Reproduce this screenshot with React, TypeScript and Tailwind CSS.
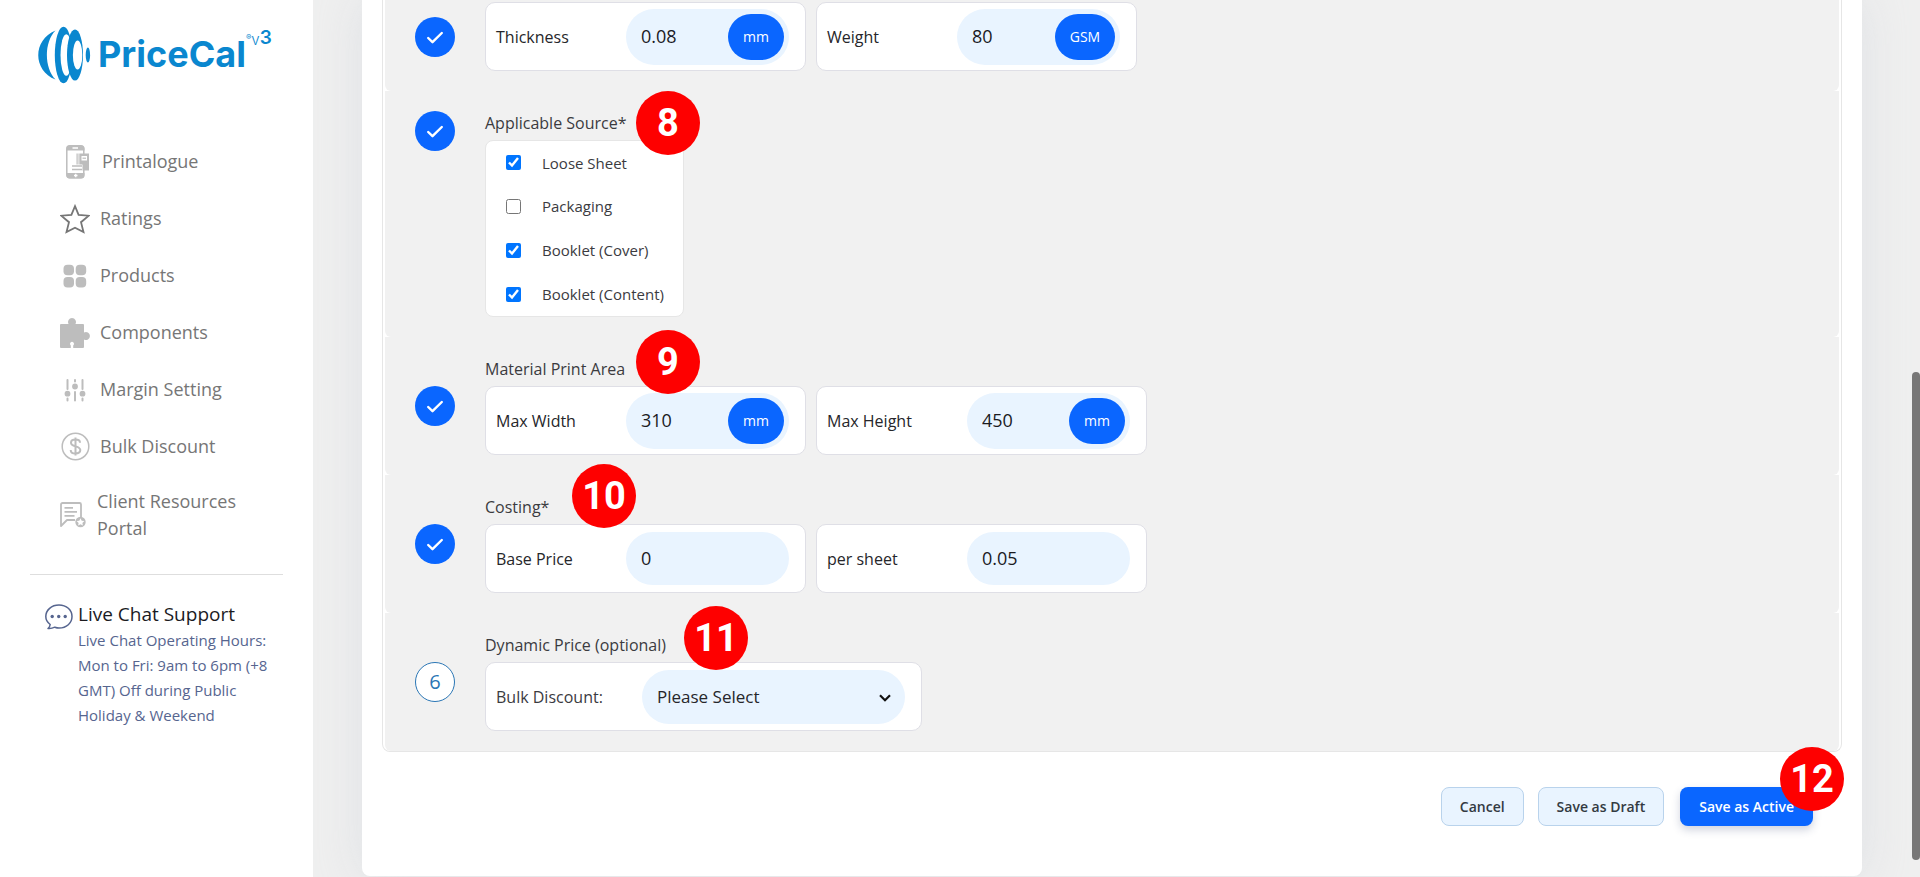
import type { ReactNode } from "react";

const GREY = "#bdbdbd";

function Logo() {
  return (
    <a href="#" aria-label="PriceCal v3" className="flex items-start pl-[38px] pt-[26px] text-[#0a87cf]">
      <svg width="54" height="58" viewBox="0 0 54 58" className="shrink-0">
        <path d="M17.500 4.500C-5.500 14 -5.500 44.500 17.500 53.500C6 42 6 16 17.500 4.500Z" fill="#0a87cf" />
        <ellipse cx="25.500" cy="29" rx="8.700" ry="28.300" fill="#0a87cf" />
        <ellipse cx="28.300" cy="29" rx="5.800" ry="20.800" fill="#fff" />
        <ellipse cx="37" cy="29" rx="8" ry="25.600" fill="#0a87cf" />
        <ellipse cx="39.600" cy="29" rx="4.700" ry="14.500" fill="#fff" />
        <ellipse cx="49.900" cy="29" rx="2.200" ry="7.500" fill="#0a87cf" />
      </svg>
      <span className="pl-[6px] pt-[7px] font-[Inter,sans-serif] text-[36px] font-bold leading-[42px]">PriceCal</span>
      <span className="flex items-start pt-1 font-[Inter,sans-serif] leading-none">
        <span className="pt-[3px] text-[8px]">®</span>
        <span className="pt-[2px] text-[15px] font-light leading-[16px]">v</span>
        <span className="text-[19px] font-semibold leading-[16px]">3</span>
      </span>
    </a>
  );
}

function PhoneIcon() {
  return (
    <svg width="24" height="34" viewBox="0 0 24 34">
      <rect x="0.800" y="0.800" width="17" height="32" rx="3" fill="#fff" stroke={GREY} strokeWidth="1.500" />
      <path d="M.5 5.500V4a3.500 3.500 0 0 1 3.500-3.500h11A3.500 3.500 0 0 1 18.500 4v1.500zM.5 28v2A3.500 3.500 0 0 0 4 33.500h11a3.500 3.500 0 0 0 3.500-3.500v-2z" fill={GREY} />
      <path d="M6.500 3h5.500M8 30.500h3.500M9.750 28.800v3.500" stroke="#fff" strokeWidth="1.300" />
      <path d="M10.500 8.500h1.200V25h-1.200zM12.500 8.500h1.200V25h-1.200z" fill={GREY} />
      <path d="M14 8.500h9V25.500h-9z" fill={GREY} />
      <path d="M15.500 11h5.500v4.500h-5.500z" fill="#fff" />
      <path d="M16.500 13.200h3.500" stroke={GREY} strokeWidth="1.200" />
      <path d="M5 19.500h11.500v7H5z" fill="#fff" />
      <path d="M6 21h10M6 24.500h10" stroke={GREY} strokeWidth="1.500" />
    </svg>
  );
}

function StarIcon() {
  return (
    <svg width="30" height="30" viewBox="0 0 30 30" fill="none" stroke="#767676" strokeWidth="1.800" strokeLinejoin="miter">
      <path d="M15 2.200l3.600 8.700 10.200.8-7.800 6.500 2.500 9.800-8.500-4.200-8.500 4.200 2.500-9.800L1.200 11.700l10.200-.8z" />
    </svg>
  );
}

function GridIcon() {
  return (
    <svg width="24" height="24" viewBox="0 0 24 24" fill={GREY}>
      <rect x="0.500" y="0.800" width="10.500" height="10.500" rx="4" />
      <rect x="12.700" y="0.800" width="10.500" height="10.500" rx="4" />
      <rect x="0.500" y="13" width="10.500" height="10.500" rx="4" />
      <rect x="12.700" y="13" width="10.500" height="10.500" rx="4" />
    </svg>
  );
}

function PuzzleIcon() {
  return (
    <svg width="30" height="30" viewBox="0 0 30 30" fill={GREY}>
      <path d="M1 6h7.500a4 4 0 1 1 7 0H23a1 1 0 0 1 1 1v7.500a4 4 0 1 1 0 7V29a1 1 0 0 1-1 1h-9.800v-2.500a2 2 0 1 0-2.400 0V30H1a1 1 0 0 1-1-1V7a1 1 0 0 1 1-1z" />
    </svg>
  );
}

function SlidersIcon() {
  return (
    <svg width="22" height="24" viewBox="0 0 22 24" stroke={GREY} strokeWidth="2" fill={GREY} strokeLinecap="round">
      <path d="M3.500 2v9M3.500 20.500v2M11 2v1.500M11 14v8.500M18.500 2v9M18.500 20.500v2" fill="none" />
      <circle cx="3.500" cy="15.700" r="1.900" />
      <circle cx="11" cy="8.500" r="1.900" />
      <circle cx="18.500" cy="15.700" r="1.900" />
    </svg>
  );
}

function DollarIcon() {
  return (
    <svg width="29" height="29" viewBox="0 0 29 29" fill="none" stroke={GREY}>
      <circle cx="14.500" cy="14.500" r="13.300" strokeWidth="1.500" />
      <path d="M14.500 5.500v18M19 10.800c0-2-1.800-3.200-4.500-3.200S10 8.800 10 10.800c0 4.600 9.300 2.600 9.300 7.300 0 2.200-2 3.400-4.800 3.400s-4.800-1.300-4.800-3.600" strokeWidth="2" />
    </svg>
  );
}

function ResourceIcon() {
  return (
    <svg width="27" height="26" viewBox="0 0 27 26" fill="none" stroke={GREY} strokeWidth="1.800">
      <path d="M15 18H7l-6 6V2.500A1.500 1.500 0 0 1 2.500 1h17A1.500 1.500 0 0 1 21 2.500V15" strokeLinejoin="round" />
      <path d="M4.500 5.800h8.500M4.500 9.800h12.500M4.500 13.800h10" />
      <circle cx="20.500" cy="20" r="5.200" fill={GREY} stroke="none" />
      <path d="M20.500 16.200l1.200 2.500 2.700.3-2 1.900.5 2.700-2.400-1.300-2.400 1.300.5-2.700-2-1.900 2.700-.3z" fill="#fff" stroke="none" />
    </svg>
  );
}

function ChatIcon() {
  return (
    <svg width="28" height="26" viewBox="0 0 28 26" fill="none" stroke="#56658f" strokeWidth="1.500" className="mt-1 shrink-0">
      <path d="M5.200 20.500C2.500 18.500.8 15.500.8 12.500.8 6 6.500 1 14 1s13 5 13 11.500S21.500 24 14 24c-1.500 0-3-.4-4.200-.8-2 1-4.400 1.600-6.800 1.300 1.300-1 2-2.400 2.200-4z" strokeLinejoin="round" />
      <g fill="#56658f" stroke="none">
        <circle cx="7.200" cy="12.500" r="1.700" />
        <circle cx="13.700" cy="12.500" r="1.700" />
        <circle cx="20.200" cy="12.500" r="1.700" />
      </g>
    </svg>
  );
}

function NavItem({ icon, children, tall = false }: { icon: ReactNode; children: ReactNode; tall?: boolean }) {
  return (
    <li>
      <a
        href="#"
        className={
          tall
            ? "flex h-20 items-center gap-[10px] pl-[60px] pr-10 text-[18px] leading-[27px] text-[#767676]"
            : "flex h-[57px] items-center gap-[10px] pl-[60px] text-[18px] leading-[27px] text-[#767676]"
        }
      >
        {icon}
        <span>{children}</span>
      </a>
    </li>
  );
}

function Slot({ children }: { children: ReactNode }) {
  return <span className="flex w-[30px] shrink-0 justify-center">{children}</span>;
}

function Sidebar() {
  return (
    <aside className="w-[313px] shrink-0 bg-white">
      <Logo />
      <nav className="mt-[49px]">
        <ul>
          <NavItem icon={<span className="flex w-8 justify-center pl-1"><PhoneIcon /></span>}>Printalogue</NavItem>
          <NavItem icon={<Slot><StarIcon /></Slot>}>Ratings</NavItem>
          <NavItem icon={<Slot><GridIcon /></Slot>}>Products</NavItem>
          <NavItem icon={<Slot><PuzzleIcon /></Slot>}>Components</NavItem>
          <NavItem icon={<Slot><SlidersIcon /></Slot>}>Margin Setting</NavItem>
          <NavItem icon={<Slot><DollarIcon /></Slot>}>Bulk Discount</NavItem>
          <NavItem tall icon={<span className="shrink-0"><ResourceIcon /></span>}>Client Resources Portal</NavItem>
        </ul>
      </nav>
      <hr className="ml-[30px] mr-[30px] mt-[19px] border-[#dedede]" />
      <div className="flex gap-[5px] pl-[45px] pr-10 pt-[25px]">
        <ChatIcon />
        <div>
          <h2 className="text-[19px] font-medium leading-[28px] text-[#1b1b1f]">Live Chat Support</h2>
          <p className="text-[15px] leading-[25px] text-[#56658f]">
            Live Chat Operating Hours: Mon to Fri: 9am to 6pm (+8 GMT) Off during Public Holiday &amp; Weekend
          </p>
        </div>
      </div>
    </aside>
  );
}

function Marker({ n, place }: { n: number; place: string }) {
  return (
    <span
      className={`absolute z-10 flex size-16 items-center justify-center rounded-full bg-[#fe0000] font-[Roboto,sans-serif] text-[38px] font-bold leading-none text-white ${place}`}
    >
      {n}
    </span>
  );
}

function Step({ n, done = true, top = false }: { n?: number; done?: boolean; top?: boolean }) {
  if (!done) {
    return (
      <span className="flex size-10 shrink-0 items-center justify-center rounded-full border border-[#2a76b5] bg-white text-[20px] text-[#2a76b5]">
        {n}
      </span>
    );
  }
  return (
    <span className={`flex size-10 shrink-0 items-center justify-center rounded-full bg-[#0a66ff] ${top ? "self-start" : ""}`}>
      <svg width="18" height="14" viewBox="0 0 18 14" fill="none" stroke="#fff" strokeWidth="2.400" strokeLinecap="round" strokeLinejoin="round">
        <path d="M2.200 8l4.300 4.200L15.800 3" />
      </svg>
    </span>
  );
}

function Section({ title, marker, step, children, first = false }: {
  title?: string;
  marker?: ReactNode;
  step: ReactNode;
  children: ReactNode;
  first?: boolean;
}) {
  return (
    <section
      className={`relative flex items-center gap-[30px] rounded-b-md bg-[#f1f1f1] pb-5 pl-[30px] pr-5 ${first ? "pt-[2px]" : "pt-5"}`}
    >
      {step}
      <div>
        {title && <h3 className="mb-[5px] text-[16px] leading-6 text-[#3b3b3f]">{title}</h3>}
        <div className="flex gap-[10px]">{children}</div>
      </div>
      {marker}
    </section>
  );
}

function Field({ id, label, value, unit, wide = false }: {
  id: string;
  label: string;
  value: string;
  unit?: string;
  wide?: boolean;
}) {
  return (
    <div
      className={`flex h-[69px] items-center justify-between rounded-[10px] border border-[#dfdfe6] bg-white pl-[10px] pr-4 ${wide ? "w-[331px]" : "w-[321px]"}`}
    >
      <label htmlFor={id} className="text-[16px] text-[#26262a]">{label}</label>
      <div className={`flex w-[163px] items-center rounded-[28px] bg-[#e9f4ff] pr-[5px] ${unit ? "h-14" : "h-[53px]"}`}>
        <input id={id} defaultValue={value} className="min-w-0 flex-1 bg-transparent pl-[15px] text-[18px] text-[#1b1b1f] outline-none" />
        {unit && (
          <span
            className={`flex h-[46px] items-center justify-center rounded-full bg-[#0a66ff] text-[14px] text-white ${unit === "GSM" ? "w-[60px]" : "w-14"}`}
          >
            {unit}
          </span>
        )}
      </div>
    </div>
  );
}

const sources = [
  { label: "Loose Sheet", on: true },
  { label: "Packaging", on: false },
  { label: "Booklet (Cover)", on: true },
  { label: "Booklet (Content)", on: true },
];

export default function App() {
  return (
    <div className="flex min-h-screen overflow-hidden bg-[#efefef] font-['Open_Sans',sans-serif]">
      <Sidebar />
      <main className="relative min-w-0 flex-1 overflow-hidden pl-[49px] pr-[58px]">
        <div className="rounded-b-lg bg-white px-5 pb-[50px] shadow-[0_0_45px_rgba(200,208,216,0.42)]">
          <div className="rounded-b-lg border border-t-0 border-[#e6e6e6] px-[2px]">
            <Section first step={<Step />}>
              <Field id="thickness" label="Thickness" value="0.08" unit="mm" />
              <Field id="weight" label="Weight" value="80" unit="GSM" />
            </Section>

            <Section title="Applicable Source*" step={<Step top />} marker={<Marker n={8} place="left-[251px] top-0" />}>
              <div className="flex h-[177px] w-[199px] flex-col rounded-lg border border-[#e6e6e6] bg-white">
                {sources.map((s) => (
                  <label key={s.label} className="flex flex-1 items-center gap-[21px] pl-5 text-[15px] text-[#3b3b3f]">
                    <input type="checkbox" defaultChecked={s.on} className="size-[15px]" />
                    {s.label}
                  </label>
                ))}
              </div>
            </Section>

            <Section title="Material Print Area" step={<Step />} marker={<Marker n={9} place="left-[251px] -top-[7px]" />}>
              <Field id="max-width" label="Max Width" value="310" unit="mm" />
              <Field id="max-height" label="Max Height" value="450" unit="mm" wide />
            </Section>

            <Section title="Costing*" step={<Step />} marker={<Marker n={10} place="left-[187px] -top-[11px]" />}>
              <Field id="base-price" label="Base Price" value="0" />
              <Field id="per-sheet" label="per sheet" value="0.05" wide />
            </Section>

            <Section title="Dynamic Price (optional)" step={<Step done={false} n={6} />} marker={<Marker n={11} place="left-[299px] -top-[7px]" />}>
              <div className="flex h-[69px] w-[437px] items-center justify-between rounded-[10px] border border-[#dfdfe6] bg-white pl-[10px] pr-4">
                <label htmlFor="bulk" className="text-[16px] text-[#3b3b3f]">Bulk Discount:</label>
                <div className="relative">
                  <select
                    id="bulk"
                    className="h-[54px] w-[263px] appearance-none rounded-[27px] bg-[#e9f4ff] pl-[15px] text-[17px] text-[#26262a] outline-none"
                  >
                    <option>Please Select</option>
                  </select>
                  <svg
                    width="12"
                    height="8"
                    viewBox="0 0 12 8"
                    fill="none"
                    stroke="#111"
                    strokeWidth="2.200"
                    className="pointer-events-none absolute right-[14px] top-6"
                  >
                    <path d="M1 1.200l5 5 5-5" />
                  </svg>
                </div>
              </div>
            </Section>
          </div>

          <div className="flex justify-end pr-[29px] pt-[35px] text-[14px] font-semibold">
            <button className="h-[39px] rounded-lg border border-[#b9d3ec] bg-[#e9f4ff] px-[18px] text-[#333a42]">Cancel</button>
            <button className="ml-[14px] h-[39px] rounded-lg border border-[#b9d3ec] bg-[#e9f4ff] px-[18px] text-[#333a42]">Save as Draft</button>
            <div className="relative ml-4">
              <button className="h-[39px] rounded-lg bg-[#0a66ff] px-[19px] text-white shadow-[0_4px_8px_rgba(40,60,110,0.22)]">
                Save as Active
              </button>
              <Marker n={12} place="-right-[31px] -top-10" />
            </div>
          </div>
        </div>
        <div className="absolute right-0 top-[372px] h-[488px] w-2 rounded-full bg-[#777]" />
      </main>
    </div>
  );
}
